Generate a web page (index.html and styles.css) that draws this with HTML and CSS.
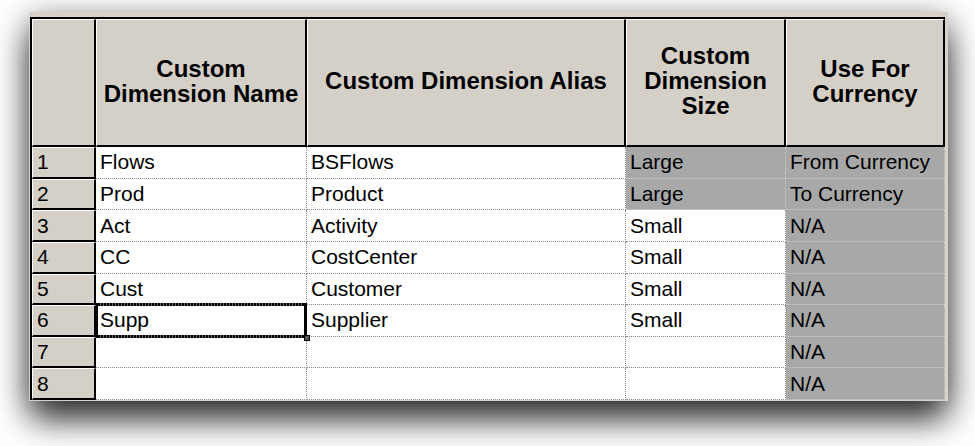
FILE: index.html
```html
<!DOCTYPE html>
<html>
<head>
<meta charset="utf-8">
<title>Custom Dimensions</title>
<link rel="stylesheet" href="styles.css">
</head>
<body>
<div class="panel">
  <div class="grid">
    <div class="hd"></div>
    <div class="hd">Custom<br>Dimension Name</div>
    <div class="hd">Custom Dimension Alias</div>
    <div class="hd">Custom<br>Dimension<br>Size</div>
    <div class="hd">Use For<br>Currency</div>

    <div class="rn">1</div><div class="c">Flows</div><div class="c">BSFlows</div><div class="c g">Large</div><div class="c g">From Currency</div>
    <div class="rn">2</div><div class="c">Prod</div><div class="c">Product</div><div class="c g">Large</div><div class="c g">To Currency</div>
    <div class="rn">3</div><div class="c">Act</div><div class="c">Activity</div><div class="c">Small</div><div class="c g">N/A</div>
    <div class="rn">4</div><div class="c">CC</div><div class="c">CostCenter</div><div class="c">Small</div><div class="c g">N/A</div>
    <div class="rn">5</div><div class="c">Cust</div><div class="c">Customer</div><div class="c">Small</div><div class="c g">N/A</div>
    <div class="rn">6</div><div class="c sel">Supp</div><div class="c">Supplier</div><div class="c">Small</div><div class="c g">N/A</div>
    <div class="rn">7</div><div class="c"></div><div class="c"></div><div class="c"></div><div class="c g">N/A</div>
    <div class="rn">8</div><div class="c"></div><div class="c"></div><div class="c"></div><div class="c g">N/A</div>
  </div>
</div>
</body>
</html>
```

FILE: styles.css
```css
html, body {
  margin: 0;
  padding: 0;
  background: #ffffff;
}

body {
  width: 975px;
  height: 446px;
  overflow: hidden;
  font-family: "Liberation Sans", Arial, sans-serif;
  color: #000;
}

.panel {
  box-sizing: border-box;
  width: 919px;
  margin: 12px 0 0 29px;
  padding: 5px 3px 1px 1px;
  background: #d6d2ca;
  box-shadow: 0 20px 32px -2px rgba(0, 0, 0, 0.78), 0 4px 30px rgba(0, 0, 0, 0.32);
}

.grid {
  display: grid;
  grid-template-columns: 64px 211px 319px 160px 159px;
  grid-template-rows: 128px repeat(8, 31.625px);
  border-top: 2px solid #000;
  border-left: 2px solid #000;
}

.hd,
.rn {
  box-sizing: border-box;
  background: #d4d0c8;
  border-top: 1px solid #fff;
  border-left: 1px solid #fff;
  border-right: 2px solid #000;
  border-bottom: 2px solid #000;
}

.hd {
  display: flex;
  align-items: center;
  justify-content: center;
  text-align: center;
  font-weight: bold;
  font-size: 24px;
  line-height: 25px;
  padding-bottom: 4px;
  white-space: nowrap;
  overflow: hidden;
}

.rn {
  display: flex;
  align-items: center;
  padding-left: 4px;
  font-size: 21px;
}

.c {
  box-sizing: border-box;
  display: flex;
  align-items: center;
  padding-left: 4px;
  background: #fff;
  border-right: 1px dotted #8a8a8a;
  border-bottom: 1px dotted #8a8a8a;
  font-size: 21px;
  white-space: nowrap;
  overflow: hidden;
}

.c.g {
  background: #a8a8a8;
  border-right-color: #cfcfcf;
  border-bottom-color: #cfcfcf;
}

.c.sel {
  position: relative;
  overflow: visible;
}

.c.sel::after {
  content: "";
  position: absolute;
  left: 0;
  right: -1px;
  top: -2px;
  bottom: -2px;
  border-left: 2px solid #000;
  border-right: 3px solid #000;
  background:
    repeating-linear-gradient(90deg, #000 0 2px, #6a6a6a 2px 3px) top left / 100% 3px no-repeat,
    repeating-linear-gradient(90deg, #000 0 2px, #6a6a6a 2px 3px) bottom left / 100% 3px no-repeat;
  pointer-events: none;
}

.c.sel::before {
  content: "";
  position: absolute;
  right: -4px;
  bottom: -5px;
  width: 4px;
  height: 4px;
  background: #555;
  border: 1px solid #000;
  z-index: 2;
}
```
